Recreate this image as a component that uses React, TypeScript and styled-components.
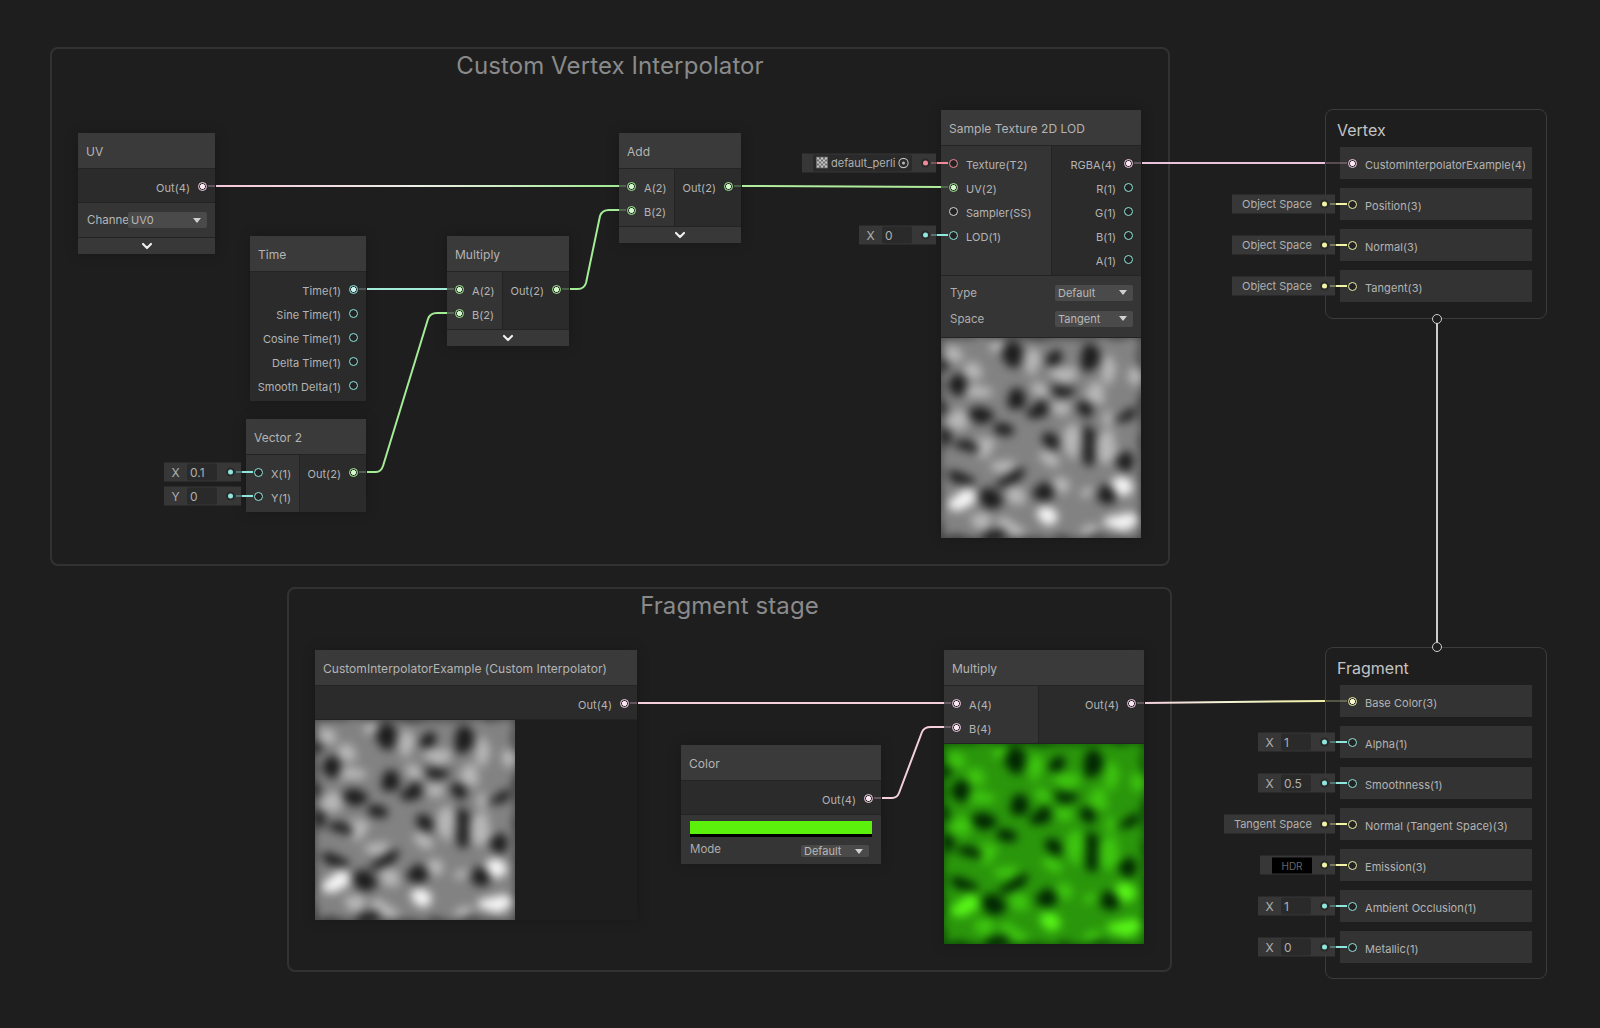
import React from "react";
import styled, { createGlobalStyle } from "styled-components";
import { ChevronDown } from "lucide-react";

const GlobalStyle = createGlobalStyle`
  html, body { margin: 0; background: #1e1e1e; }
  body { font-family: Inter, "Liberation Sans", sans-serif; }
`;

const C = {
  v1: "#8fe6dc",
  v2: "#a4ec95",
  v3: "#f2f3a6",
  v4: "#f5cfe6",
  tex: "#f08a9a",
  samp: "#d6d6d6",
};

const Canvas = styled.main`
  position: relative;
  width: 1600px;
  height: 1028px;
  overflow: hidden;
  background: #1e1e1e;
`;

const Frame = styled.div<{ $x: number; $y: number; $w: number; $h: number }>`
  position: absolute;
  left: ${(p) => p.$x}px;
  top: ${(p) => p.$y}px;
  width: ${(p) => p.$w}px;
  height: ${(p) => p.$h}px;
  box-sizing: border-box;
  border: 2px solid #323232;
  border-radius: 8px;
`;

const FrameTitle = styled.h2`
  margin: 0;
  padding-top: 2px;
  text-align: center;
  font-size: 24px;
  line-height: 30px;
  font-weight: 400;
  letter-spacing: 0.1px;
  color: #8a8a8a;
`;

const Node = styled.section<{ $x: number; $y: number; $w: number }>`
  position: absolute;
  z-index: 2;
  left: ${(p) => p.$x}px;
  top: ${(p) => p.$y}px;
  width: ${(p) => p.$w}px;
  display: flex;
  flex-direction: column;
  box-shadow: 0 0 12px rgba(0, 0, 0, 0.22);
`;

const Header = styled.header`
  flex: none;
  height: 34px;
  padding: 1px 8px 0;
  display: flex;
  align-items: center;
  background: #3a3a3a;
  border-bottom: 1px solid #242424;
  font-size: 12px;
  letter-spacing: 0.03px;
  color: #b4b4b4;
`;

const Ports = styled.div`
  display: flex;
  background: #2b2b2b;
  border-bottom: 1px solid #232323;
  &:last-child {
    border-bottom: none;
  }
`;

const InCol = styled.div<{ $w: number }>`
  flex: none;
  width: ${(p) => p.$w}px;
  padding: 5px 0 4px;
  background: #343434;
  border-right: 1px solid #242424;
  box-sizing: border-box;
`;

const OutCol = styled.div`
  flex: 1;
  min-width: 0;
  padding: 5px 0 4px;
`;

const Row = styled.div<{ $out?: boolean }>`
  position: relative;
  height: 24px;
  padding: 0 8px;
  display: flex;
  align-items: center;
  gap: 8px;
  justify-content: ${(p) => (p.$out ? "flex-end" : "flex-start")};
`;

const Label = styled.span`
  padding-top: 4px;
  font-size: 11px;
  line-height: 14px;
  letter-spacing: 0.05px;
  white-space: nowrap;
  color: #b4b4b4;
`;

const Port = styled.span<{ $c: string; $on?: boolean }>`
  flex: none;
  width: 9px;
  height: 9px;
  box-sizing: border-box;
  border: 1.5px solid ${(p) => p.$c};
  border-radius: 50%;
  background: ${(p) =>
    p.$on
      ? `radial-gradient(circle, color-mix(in srgb, ${p.$c} 50%, #fff) 0 2.2px, #2a2a2a 2.7px)`
      : "#222"};
`;

const Controls = styled.div<{ $pad?: string }>`
  padding: ${(p) => p.$pad ?? "3.5px 8px 5.5px 9px"};
  background: #353535;
  border-bottom: 1px solid #232323;
  &:last-child {
    border-bottom: none;
  }
`;

const ControlRow = styled.div<{ $h?: number }>`
  height: ${(p) => p.$h ?? 26}px;
  display: flex;
  align-items: center;
  justify-content: space-between;
  font-size: 11.5px;
  color: #adadad;
`;

const ModeRow = styled(ControlRow)`
  padding: 1px 3px 0 0;
  box-sizing: border-box;
`;

const ChannelLabel = styled.span`
  width: 41px;
  white-space: nowrap;
  font-size: 11.5px;
  color: #b6b6b6;
`;

const Dropdown = styled.div<{ $w: number; $h?: number; $drop?: number }>`
  width: ${(p) => p.$w}px;
  height: ${(p) => p.$h ?? 16}px;
  margin-top: ${(p) => p.$drop ?? 0}px;
  padding: 0 6px 0 3px;
  box-sizing: border-box;
  display: flex;
  align-items: center;
  justify-content: space-between;
  background: #4a4a4a;
  border-radius: 2px;
  font-size: 11px;
  color: #b8b8b8;
  &::after {
    content: "";
    border-left: 4px solid transparent;
    border-right: 4px solid transparent;
    border-top: 5px solid #d0d0d0;
  }
`;

const ChevronBar = styled.div`
  height: 16px;
  display: flex;
  align-items: center;
  justify-content: center;
  background: #383838;
  color: #eeeeee;
`;

const Preview = styled.svg`
  display: block;
  flex: none;
  width: 200px;
  height: 200px;
`;

const ColorBar = styled.div`
  height: 13px;
  background: #5cf10c;
  border-bottom: 3px solid #000;
`;

const Block = styled.section<{ $y: number; $h: number }>`
  position: absolute;
  z-index: 1;
  left: 1325px;
  top: ${(p) => p.$y}px;
  width: 222px;
  height: ${(p) => p.$h}px;
  box-sizing: border-box;
  padding: 0 14px;
  border: 1px solid #3b3b3b;
  border-radius: 8px;
  display: flex;
  flex-direction: column;
  gap: 9px;
`;

const BlockTitle = styled.h3`
  margin: 0 0 -9px -3px;
  height: 37px;
  flex: none;
  padding-top: 10px;
  box-sizing: border-box;
  font-size: 16px;
  line-height: 20px;
  font-weight: 400;
  color: #c4c4c4;
`;

const BlockRow = styled(Row)`
  height: 32px;
  flex: none;
  margin: 0;
  background: #333333;
`;

const FlowPort = styled.span<{ $top?: boolean }>`
  position: absolute;
  left: 106px;
  ${(p) => (p.$top ? "top: -6px;" : "bottom: -6px;")}
  width: 10px;
  height: 10px;
  box-sizing: border-box;
  border: 1.5px solid #cfcfcf;
  border-radius: 50%;
  background: #1e1e1e;
`;

const Chip = styled.div`
  position: absolute;
  right: calc(100% + 5px);
  top: 50%;
  transform: translateY(-50%);
  height: 19px;
  display: flex;
  align-items: center;
  background: #373737;
  font-size: 11px;
  color: #b0b0b0;
  white-space: nowrap;
`;

const ChipAxis = styled.span`
  width: 23px;
  padding-bottom: 1px;
  font-size: 12px;
  text-align: center;
`;

const ChipGap = styled.span`
  width: 11px;
`;

const ChipField = styled.span<{ $w?: number }>`
  width: ${(p) => p.$w ?? 30}px;
  height: 17px;
  padding: 0 0 1px 3px;
  box-sizing: border-box;
  display: flex;
  align-items: center;
  gap: 3px;
  background: #2a2a2a;
  border-radius: 2px;
  color: #b0b0b0;
`;

const ChipValue = styled(ChipField)`
  font-size: 12px;
`;

const ChipText = styled.span`
  padding: 0 0 1px 10px;
`;

const Hdr = styled.span`
  width: 40px;
  height: 16px;
  margin-left: 12px;
  display: flex;
  align-items: center;
  justify-content: center;
  background: #000;
  font-size: 10px;
  color: #666;
`;

const ChipDot = styled.span<{ $c: string; $w?: number }>`
  width: ${(p) => p.$w ?? 24}px;
  padding-right: 8px;
  box-sizing: border-box;
  display: flex;
  justify-content: flex-end;
  &::after {
    content: "";
    width: 5px;
    height: 5px;
    border-radius: 50%;
    background: ${(p) => p.$c};
    box-shadow: 0 0 0 2px rgba(0, 0, 0, 0.25);
  }
`;

const WireLayer = styled.svg`
  position: absolute;
  z-index: 3;
  left: 0;
  top: 0;
  width: 1600px;
  height: 1028px;
  pointer-events: none;
`;

// blobs of the perlin preview: x, y, rx, ry, rotation
type Blob = [number, number, number, number, number?];

const DARK: Blob[] = [
  [72, 18, 7, 12], [147, 22, 7, 12], [112, 20, 6, 7], [19, 45, 8, 8], [122, 53, 10, 5],
  [76, 60, 8, 8], [39, 75, 13, 7], [96, 74, 9, 7], [61, 92, 9, 7], [146, 70, 6, 8],
  [149, 97, 6, 10], [149, 117, 6, 12], [112, 102, 7, 9], [182, 122, 7, 9], [186, 78, 11, 5, -40],
  [6, 100, 6, 8], [26, 108, 10, 5], [22, 140, 13, 6, 30], [69, 142, 13, 5, -30], [49, 162, 11, 8],
  [104, 155, 10, 9], [166, 158, 8, 8], [52, 195, 14, 5], [3, 27, 4, 6], [4, 68, 4, 6],
];

const LIGHT: Blob[] = [
  [32, 33, 9, 9], [92, 23, 7, 12], [124, 35, 12, 7], [167, 32, 7, 12], [57, 10, 6, 6],
  [12, 15, 8, 8], [39, 55, 12, 5], [97, 55, 7, 7], [154, 53, 8, 8], [121, 72, 9, 7],
  [17, 83, 9, 9], [131, 103, 7, 14], [166, 110, 7, 14], [166, 80, 4, 9], [42, 107, 8, 8],
  [61, 128, 10, 6], [107, 123, 7, 7], [121, 145, 7, 7], [192, 40, 6, 8], [146, 157, 5, 5],
  [76, 157, 8, 8], [39, 182, 8, 6], [147, 192, 9, 6], [69, 190, 12, 6, 30],
];

const BRIGHT: Blob[] = [
  [181, 147, 9, 9], [19, 162, 12, 7], [107, 180, 9, 8], [181, 183, 14, 7],
];

type Palette = { base: string; dark: string; light: string; bright: string; edge: string };

const GREY: Palette = { base: "#828282", dark: "#1c1c1c", light: "#b8b8b8", bright: "#f6f6f6", edge: "#343434" };
const GREEN: Palette = { base: "#2a960b", dark: "#012602", light: "#3ec610", bright: "#58f618", edge: "#083e04" };

const Noise: React.FC<{ id: string; p: Palette }> = ({ id, p }) => {
  const blobs = (list: Blob[], fill: string) =>
    list.map(([x, y, rx, ry, r], i) => (
      <ellipse
        key={i}
        cx={x}
        cy={y}
        rx={rx * 1.15}
        ry={ry * 1.15}
        fill={fill}
        transform={r ? `rotate(${r} ${x} ${y})` : undefined}
      />
    ));
  return (
    <Preview viewBox="0 0 200 200">
      <defs>
        <filter id={id} x="-10%" y="-10%" width="120%" height="120%" colorInterpolationFilters="sRGB">
          <feTurbulence type="fractalNoise" baseFrequency="0.035" numOctaves="2" seed="7" result="warp" />
          <feDisplacementMap in="SourceGraphic" in2="warp" scale="16" xChannelSelector="R" yChannelSelector="G" />
          <feGaussianBlur stdDeviation="5" />
        </filter>
      </defs>
      <g filter={`url(#${id})`}>
        <rect x="-20" y="-20" width="240" height="240" fill={p.base} />
        {blobs(LIGHT, p.light)}
        {blobs(BRIGHT, p.bright)}
        {blobs(DARK, p.dark)}
        <rect x="-4" y="-4" width="208" height="208" fill="none" stroke={p.edge} strokeWidth="8" />
      </g>
    </Preview>
  );
};

const TexIcon: React.FC = () => (
  <svg width="12" height="12" viewBox="0 0 12 12">
    <rect width="12" height="12" fill="#6f6f6f" />
    <path d="M1 1h2v2H1zM5 1h2v2H5zM9 1h2v2H9zM3 3h2v2H3zM7 3h2v2H7zM1 5h2v2H1zM5 5h2v2H5zM9 5h2v2H9zM3 7h2v2H3zM7 7h2v2H7zM1 9h2v2H1zM5 9h2v2H5zM9 9h2v2H9z" fill="#c4c4c4" />
  </svg>
);

const SelectIcon: React.FC = () => (
  <svg width="11" height="11" viewBox="0 0 11 11">
    <circle cx="5.5" cy="5.5" r="4.6" fill="none" stroke="#bdbdbd" strokeWidth="1.1" />
    <circle cx="5.5" cy="5.5" r="1.5" fill="#bdbdbd" />
  </svg>
);

const Chevron: React.FC = () => (
  <ChevronBar>
    <ChevronDown size={16} strokeWidth={3.2} />
  </ChevronBar>
);

const AxisChip: React.FC<{ axis: string; value: string; c: string }> = ({ axis, value, c }) => (
  <Chip>
    <ChipAxis>{axis}</ChipAxis>
    <ChipValue>{value}</ChipValue>
    <ChipDot $c={c} />
  </Chip>
);

const SpaceChip: React.FC<{ text: string; c: string }> = ({ text, c }) => (
  <Chip>
    <ChipText>{text}</ChipText>
    <ChipDot $c={c} $w={23} />
  </Chip>
);

const In: React.FC<{ name: string; c: string; on?: boolean; chip?: React.ReactNode }> = ({ name, c, on, chip }) => (
  <Row>
    {chip}
    <Port $c={c} $on={on} />
    <Label>{name}</Label>
  </Row>
);

const Out: React.FC<{ name: string; c: string; on?: boolean }> = ({ name, c, on }) => (
  <Row $out>
    <Label>{name}</Label>
    <Port $c={c} $on={on} />
  </Row>
);

const BlockIn: React.FC<{ name: string; c: string; on?: boolean; chip?: React.ReactNode }> = ({ name, c, on, chip }) => (
  <BlockRow>
    {chip}
    <Port $c={c} $on={on} />
    <Label>{name}</Label>
  </BlockRow>
);

const Wire: React.FC<{ d: string; c: string; w?: number }> = ({ d, c, w = 2 }) => (
  <path d={d} fill="none" stroke={c} strokeWidth={w} strokeLinejoin="round" />
);

// port stubs: [x1, x2, y, colour]
const DIM: [number, number, number, string][] = [
  [208, 215, 186, C.v4], [359, 366, 289, C.v1], [447, 454, 289, C.v2], [447, 454, 313, C.v2],
  [562, 569, 289, C.v2], [359, 366, 472, C.v2], [619, 626, 186, C.v2], [619, 626, 210, C.v2],
  [734, 741, 186, C.v2], [941, 948, 187, C.v2], [1134, 1141, 163, C.v4], [1326, 1347, 163, C.v4],
  [630, 637, 703, C.v4], [944, 951, 703, C.v4], [944, 951, 727, C.v4], [874, 881, 798, C.v4],
  [1137, 1144, 703, C.v4], [1326, 1347, 701, C.v3],
];

// chip stubs: [port x, y, colour]
const CHIPPED: [number, number, string][] = [
  [258, 472, C.v1], [258, 496, C.v1], [953, 235, C.v1], [953, 163, C.tex],
  [1352, 204, C.v3], [1352, 245, C.v3], [1352, 286, C.v3],
  [1352, 742, C.v1], [1352, 783, C.v1], [1352, 824, C.v3], [1352, 865, C.v3], [1352, 906, C.v1], [1352, 947, C.v1],
];

const App: React.FC = () => (
  <Canvas>
    <GlobalStyle />

    <Frame $x={50} $y={47} $w={1120} $h={519}>
      <FrameTitle>Custom Vertex Interpolator</FrameTitle>
    </Frame>
    <Frame $x={287} $y={587} $w={885} $h={385}>
      <FrameTitle>Fragment stage</FrameTitle>
    </Frame>

    <Node $x={78} $y={133} $w={137}>
      <Header>UV</Header>
      <Ports>
        <OutCol>
          <Out name="Out(4)" c={C.v4} on />
        </OutCol>
      </Ports>
      <Controls $pad="0 8px 0 9px">
        <ControlRow $h={34}>
          <ChannelLabel>Channe</ChannelLabel>
          <Dropdown $w={79}>UV0</Dropdown>
        </ControlRow>
      </Controls>
      <Chevron />
    </Node>

    <Node $x={250} $y={236} $w={116}>
      <Header>Time</Header>
      <Ports>
        <OutCol>
          <Out name="Time(1)" c={C.v1} on />
          <Out name="Sine Time(1)" c={C.v1} />
          <Out name="Cosine Time(1)" c={C.v1} />
          <Out name="Delta Time(1)" c={C.v1} />
          <Out name="Smooth Delta(1)" c={C.v1} />
        </OutCol>
      </Ports>
    </Node>

    <Node $x={246} $y={419} $w={120}>
      <Header>Vector 2</Header>
      <Ports>
        <InCol $w={54}>
          <In name="X(1)" c={C.v1} chip={<AxisChip axis="X" value="0.1" c={C.v1} />} />
          <In name="Y(1)" c={C.v1} chip={<AxisChip axis="Y" value="0" c={C.v1} />} />
        </InCol>
        <OutCol>
          <Out name="Out(2)" c={C.v2} on />
        </OutCol>
      </Ports>
    </Node>

    <Node $x={447} $y={236} $w={122}>
      <Header>Multiply</Header>
      <Ports>
        <InCol $w={56}>
          <In name="A(2)" c={C.v2} on />
          <In name="B(2)" c={C.v2} on />
        </InCol>
        <OutCol>
          <Out name="Out(2)" c={C.v2} on />
        </OutCol>
      </Ports>
      <Chevron />
    </Node>

    <Node $x={619} $y={133} $w={122}>
      <Header>Add</Header>
      <Ports>
        <InCol $w={56}>
          <In name="A(2)" c={C.v2} on />
          <In name="B(2)" c={C.v2} on />
        </InCol>
        <OutCol>
          <Out name="Out(2)" c={C.v2} on />
        </OutCol>
      </Ports>
      <Chevron />
    </Node>

    <Node $x={941} $y={110} $w={200}>
      <Header>Sample Texture 2D LOD</Header>
      <Ports>
        <InCol $w={111}>
          <In
            name="Texture(T2)"
            c={C.tex}
            chip={
              <Chip>
                <ChipGap />
                <ChipField $w={99}>
                  <TexIcon />
                  default_perli
                  <SelectIcon />
                </ChipField>
                <ChipDot $c={C.tex} />
              </Chip>
            }
          />
          <In name="UV(2)" c={C.v2} on />
          <In name="Sampler(SS)" c={C.samp} />
          <In name="LOD(1)" c={C.v1} chip={<AxisChip axis="X" value="0" c={C.v1} />} />
          <Row />
        </InCol>
        <OutCol>
          <Out name="RGBA(4)" c={C.v4} on />
          <Out name="R(1)" c={C.v1} />
          <Out name="G(1)" c={C.v1} />
          <Out name="B(1)" c={C.v1} />
          <Out name="A(1)" c={C.v1} />
        </OutCol>
      </Ports>
      <Controls>
        <ControlRow>
          Type
          <Dropdown $w={78}>Default</Dropdown>
        </ControlRow>
        <ControlRow>
          Space
          <Dropdown $w={78}>Tangent</Dropdown>
        </ControlRow>
      </Controls>
      <Noise id="noise-lod" p={GREY} />
    </Node>

    <Node $x={315} $y={650} $w={322}>
      <Header>CustomInterpolatorExample (Custom Interpolator)</Header>
      <Ports>
        <OutCol>
          <Out name="Out(4)" c={C.v4} on />
        </OutCol>
      </Ports>
      <Noise id="noise-custom" p={GREY} />
    </Node>

    <Node $x={681} $y={745} $w={200}>
      <Header>Color</Header>
      <Ports>
        <OutCol>
          <Out name="Out(4)" c={C.v4} on />
        </OutCol>
      </Ports>
      <Controls $pad="6px 9px 5px 9px">
        <ColorBar />
        <ModeRow $h={22}>
          Mode
          <Dropdown $w={68} $h={12} $drop={5}>
            Default
          </Dropdown>
        </ModeRow>
      </Controls>
    </Node>

    <Node $x={944} $y={650} $w={200}>
      <Header>Multiply</Header>
      <Ports>
        <InCol $w={95}>
          <In name="A(4)" c={C.v4} on />
          <In name="B(4)" c={C.v4} on />
        </InCol>
        <OutCol>
          <Out name="Out(4)" c={C.v4} on />
        </OutCol>
      </Ports>
      <Noise id="noise-green" p={GREEN} />
    </Node>

    <Block $y={109} $h={210}>
      <BlockTitle>Vertex</BlockTitle>
      <BlockIn name="CustomInterpolatorExample(4)" c={C.v4} on />
      <BlockIn name="Position(3)" c={C.v3} chip={<SpaceChip text="Object Space" c={C.v3} />} />
      <BlockIn name="Normal(3)" c={C.v3} chip={<SpaceChip text="Object Space" c={C.v3} />} />
      <BlockIn name="Tangent(3)" c={C.v3} chip={<SpaceChip text="Object Space" c={C.v3} />} />
      <FlowPort />
    </Block>

    <Block $y={647} $h={332}>
      <FlowPort $top />
      <BlockTitle>Fragment</BlockTitle>
      <BlockIn name="Base Color(3)" c={C.v3} on />
      <BlockIn name="Alpha(1)" c={C.v1} chip={<AxisChip axis="X" value="1" c={C.v1} />} />
      <BlockIn name="Smoothness(1)" c={C.v1} chip={<AxisChip axis="X" value="0.5" c={C.v1} />} />
      <BlockIn name="Normal (Tangent Space)(3)" c={C.v3} chip={<SpaceChip text="Tangent Space" c={C.v3} />} />
      <BlockIn
        name="Emission(3)"
        c={C.v3}
        chip={
          <Chip>
            <Hdr>HDR</Hdr>
            <ChipDot $c={C.v3} $w={23} />
          </Chip>
        }
      />
      <BlockIn name="Ambient Occlusion(1)" c={C.v1} chip={<AxisChip axis="X" value="1" c={C.v1} />} />
      <BlockIn name="Metallic(1)" c={C.v1} chip={<AxisChip axis="X" value="0" c={C.v1} />} />
    </Block>

    <WireLayer viewBox="0 0 1600 1028">
      <defs>
        <linearGradient id="uv-add" gradientUnits="userSpaceOnUse" x1="215" x2="619" y1="0" y2="0">
          <stop offset="0" stopColor="#f6c6da" />
          <stop offset="0.5" stopColor="#ecefe6" />
          <stop offset="1" stopColor="#a0ea92" />
        </linearGradient>
        <linearGradient id="mul-frag" gradientUnits="userSpaceOnUse" x1="1144" x2="1326" y1="0" y2="0">
          <stop offset="0" stopColor="#f4cfe0" />
          <stop offset="0.4" stopColor="#f5f2d8" />
          <stop offset="1" stopColor="#eef0a4" />
        </linearGradient>
      </defs>

      <Wire d="M1437 323V642" c="#cccccc" />
      <Wire d="M216 186H619" c="url(#uv-add)" />
      <Wire d="M367 289H447" c="#a4ecd8" />
      <Wire d="M570 289H578Q584 289 586 283L600 216Q602 210 609 210H619" c="#a4ec95" />
      <Wire d="M367 472H376Q381 472 383 466L428 319Q430 313 437 313H447" c="#a4ec95" />
      <Wire d="M742 186L941 187" c="#b2ec9f" />
      <Wire d="M1142 163H1325" c="#eac2dc" />
      <Wire d="M638 703H944" c="#f5d0dc" />
      <Wire d="M882 798H892Q897 798 899 793L922 732Q924 727 931 727H944" c="#f5d0dc" />
      <Wire d="M1145 703L1325 701" c="url(#mul-frag)" />

      {DIM.map(([x1, x2, y, c], i) => (
        <line key={i} x1={x1} x2={x2} y1={y} y2={y} stroke={c} strokeWidth={1.5} opacity={0.35} />
      ))}
      {CHIPPED.map(([x, y, c], i) => (
        <g key={i}>
          <line x1={x - 22} x2={x - 16} y1={y} y2={y} stroke={c} strokeWidth={2} opacity={0.35} />
          <line x1={x - 16} x2={x - 5} y1={y} y2={y} stroke={c} strokeWidth={2} />
        </g>
      ))}
    </WireLayer>
  </Canvas>
);

export default App;
